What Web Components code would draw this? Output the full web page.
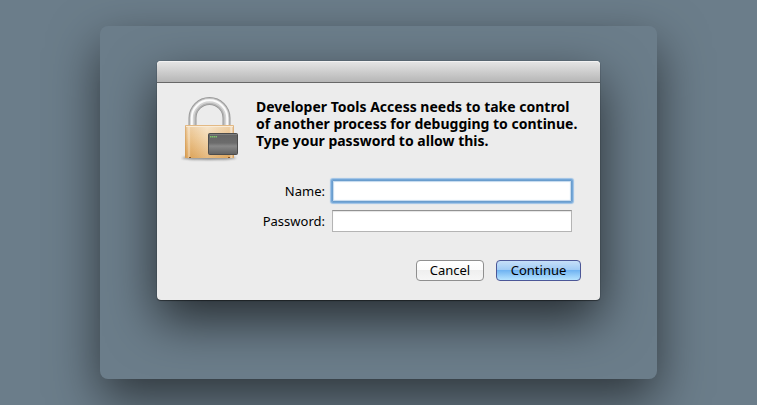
<!DOCTYPE html>
<html lang="en">
<head>
<meta charset="utf-8">
<meta name="viewport" content="width=device-width, initial-scale=1">
<title>Developer Tools Access</title>
<style>
    body {
        margin: 0;
        background: #6b7d8a;
        color: #000;
        font: 13px/17px "Noto Sans", "Open Sans", sans-serif;
    }
</style>
</head>
<body>
<backdrop-panel>
    <auth-dialog>
        <lock-icon slot="icon"></lock-icon>
        <span slot="message">Developer Tools Access needs to take control of another process for debugging to continue. Type your password to allow this.</span>
        <form-field label="Name:" type="text" active></form-field>
        <form-field label="Password:" type="password"></form-field>
        <push-button slot="actions">Cancel</push-button>
        <push-button slot="actions" primary>Continue</push-button>
    </auth-dialog>
</backdrop-panel>

<script>
class BackdropPanel extends HTMLElement {
    connectedCallback() {
        this.attachShadow({ mode: 'open' });
        this.shadowRoot.innerHTML = `
            <style>
                :host {
                    display: block;
                    padding: 26px 0;
                    overflow: clip;
                }

                .panel {
                    box-sizing: border-box;
                    max-width: 557px;
                    margin: 0 auto;
                    padding: 35px 57px 79px;
                    border-radius: 8px;
                    background: #6b7d8a;
                    box-shadow: 0 20px 50px rgba(0, 0, 0, 0.57);
                }
            </style>
            <main class="panel"><slot></slot></main>
        `;
    }
}

class AuthDialog extends HTMLElement {
    connectedCallback() {
        this.attachShadow({ mode: 'open' });
        this.shadowRoot.innerHTML = `
            <style>
                :host {
                    display: block;
                    border-radius: 4px;
                    background: #ececec;
                    box-shadow: 0 0 1px rgba(0, 0, 0, 0.6), 0 1px 1px rgba(0, 0, 0, 0.4), 0 20px 50px rgba(0, 0, 0, 0.65);
                }

                .titlebar {
                    height: 21px;
                    border-bottom: 1px solid #686868;
                    border-radius: 4px 4px 0 0;
                    background: linear-gradient(#e6e6e6, #b6b6b6);
                    box-shadow: inset 0 1px #f2f2f2;
                }

                .body {
                    display: grid;
                    grid-template-columns: 60px 1fr;
                    column-gap: 15px;
                    padding: 15px 19px 19px 24px;
                }

                p {
                    margin: 0;
                    font-size: 14px;
                    font-weight: bold;
                }

                .fields {
                    display: grid;
                    gap: 8px;
                    margin: 31px 9px 28px 0;
                }

                .actions {
                    display: flex;
                    justify-content: flex-end;
                    gap: 12px;
                }
            </style>
            <section role="dialog" aria-labelledby="message">
                <div class="titlebar"></div>
                <div class="body">
                    <slot name="icon"></slot>
                    <div>
                        <p id="message"><slot name="message"></slot></p>
                        <div class="fields"><slot></slot></div>
                        <div class="actions"><slot name="actions"></slot></div>
                    </div>
                </div>
            </section>
        `;
    }
}

class FormField extends HTMLElement {
    connectedCallback() {
        const label = this.getAttribute('label') || '';
        const type = this.getAttribute('type') || 'text';

        this.attachShadow({ mode: 'open' });
        this.shadowRoot.innerHTML = `
            <style>
                :host {
                    display: grid;
                    grid-template-columns: 69px 1fr;
                    column-gap: 7px;
                    align-items: center;
                }

                label {
                    text-align: right;
                    white-space: nowrap;
                }

                input {
                    box-sizing: border-box;
                    width: 100%;
                    height: 22px;
                    margin: 0;
                    padding: 0 4px;
                    border: 1px solid #b4b4b4;
                    border-top-color: #929292;
                    border-radius: 0;
                    outline: none;
                    background: #fff;
                    box-shadow: inset 0 1px 1px #e4e4e4;
                    font: inherit;
                }

                :host([active]) input,
                input:focus {
                    border-color: #6a9dcd;
                    box-shadow: 0 0 1px 1px #6fa3d6, 0 0 1px 2px #a3c6e8, inset 0 0 1px 1px #c3d9ee;
                    border-radius: 1px;
                }
            </style>
            <label for="field">${label}</label>
            <input id="field" type="${type}">
        `;
    }
}

class PushButton extends HTMLElement {
    connectedCallback() {
        this.attachShadow({ mode: 'open' });
        this.shadowRoot.innerHTML = `
            <style>
                :host {
                    display: block;
                }

                button {
                    display: block;
                    height: 21px;
                    min-width: 68px;
                    margin: 0;
                    padding: 0 12px;
                    border: 1px solid #8f8f8f;
                    border-radius: 4px;
                    background: linear-gradient(#fff, #fbfbfb 50%, #efefef 50%, #f6f6f6);
                    color: #000;
                    font: inherit;
                    white-space: nowrap;
                }

                :host([primary]) button {
                    min-width: 85px;
                    border-color: #4c5797;
                    background: linear-gradient(#c6dff8, #9ecaf5 50%, #71b4f2 50%, #b7e4ff);
                }
            </style>
            <button type="button"><slot></slot></button>
        `;
    }
}

class LockIcon extends HTMLElement {
    connectedCallback() {
        this.attachShadow({ mode: 'open' });
        this.shadowRoot.innerHTML = `
            <style>
                :host {
                    display: block;
                }

                svg {
                    display: block;
                    margin-top: -3px;
                }
            </style>
            <svg width="60" height="68" viewBox="0 0 60 68" aria-hidden="true">
                <defs>
                    <linearGradient id="brass" x2="0" y2="1">
                        <stop offset="0" stop-color="#f4dfc1"/>
                        <stop offset=".35" stop-color="#f0cfa0"/>
                        <stop offset="1" stop-color="#dfa860"/>
                    </linearGradient>
                    <linearGradient id="shine">
                        <stop offset="0" stop-color="#c58336" stop-opacity=".6"/>
                        <stop offset=".05" stop-color="#d79a4d" stop-opacity=".1"/>
                        <stop offset=".08" stop-color="#fff" stop-opacity=".5"/>
                        <stop offset=".12" stop-color="#d79a4d" stop-opacity=".2"/>
                        <stop offset=".45" stop-color="#fff" stop-opacity=".2"/>
                        <stop offset=".9" stop-color="#d79a4d" stop-opacity=".2"/>
                        <stop offset=".94" stop-color="#fff" stop-opacity=".5"/>
                        <stop offset="1" stop-color="#c58336" stop-opacity=".6"/>
                    </linearGradient>
                    <linearGradient id="device" x2="0" y2="1">
                        <stop offset="0" stop-color="#646464"/>
                        <stop offset=".45" stop-color="#6c6c6c"/>
                        <stop offset=".6" stop-color="#888"/>
                        <stop offset="1" stop-color="#606060"/>
                    </linearGradient>
                    <filter id="soft" x="-20%" y="-100%" width="140%" height="300%">
                        <feGaussianBlur stdDeviation="1"/>
                    </filter>
                </defs>
                <ellipse cx="28" cy="63" rx="27" ry="2" fill="#555" opacity=".6" filter="url(#soft)"/>
                <g fill="none">
                    <path d="M11.500 31V23a17 17 0 0 1 34 0V31" stroke="#959595" stroke-width="8"/>
                    <path d="M11.500 31V23a17 17 0 0 1 34 0V31" stroke="#b4b4b4" stroke-width="6.500"/>
                    <path d="M11.200 31V23a17.300 17.300 0 0 1 34.600 0V31" stroke="#d4d4d4" stroke-width="4.500"/>
                    <path d="M10.800 31V23a17.700 17.700 0 0 1 35.400 0V31" stroke="#fbfbfb" stroke-width="2"/>
                </g>
                <rect x="4" y="30" width="49" height="33" rx="1" fill="url(#brass)"/>
                <rect x="4" y="30" width="49" height="33" rx="1" fill="url(#shine)"/>
                <path d="M5 30.500H52" stroke="#e3b984"/>
                <path d="M5 31.500H52" stroke="#f9ecd8"/>
                <path d="M8 62.500h2M47 62.500h2" stroke="#8b5520"/>
                <rect x="27.500" y="38.500" width="29" height="21" rx="1" fill="url(#device)" stroke="#4c4c4c"/>
                <path d="M29 39.500H56" stroke="#7d7d7d"/>
                <path d="M29 41.700H36" stroke="#7cc46a" stroke-width="1.400" stroke-dasharray="1.500 .5"/>
            </svg>
        `;
    }
}

customElements.define('backdrop-panel', BackdropPanel);
customElements.define('auth-dialog', AuthDialog);
customElements.define('form-field', FormField);
customElements.define('push-button', PushButton);
customElements.define('lock-icon', LockIcon);
</script>
</body>
</html>
